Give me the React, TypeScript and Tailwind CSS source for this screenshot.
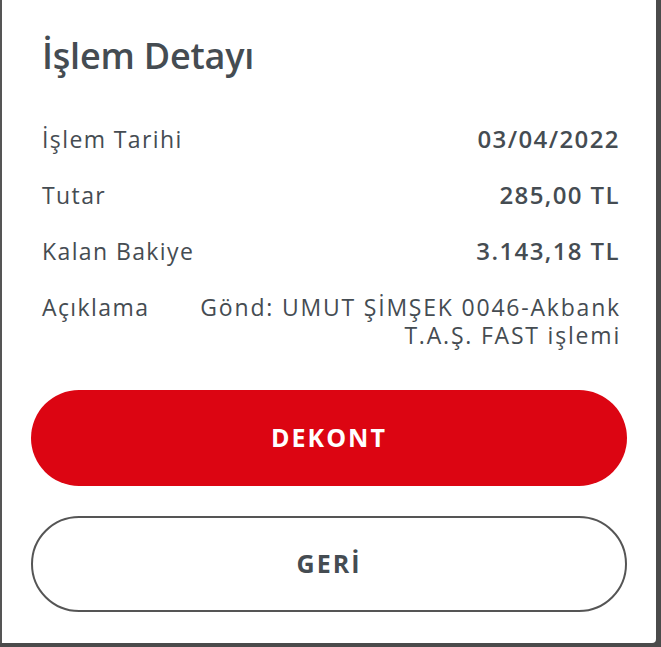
const rows = [
  { label: "İşlem Tarihi", value: "03/04/2022" },
  { label: "Tutar", value: "285,00 TL" },
  { label: "Kalan Bakiye", value: "3.143,18 TL" },
];

export default function App() {
  return (
    <div className="w-[661px] h-[647px] bg-[#4b4b4b] overflow-hidden font-['Open_Sans',sans-serif]">
      <div className="w-[656px] h-[643px] bg-white border-l-2 border-[#555] rounded-br-[4px] flex flex-col">
        <h1 className="pl-[40px] pt-[34px] text-[36px] leading-[44px] font-semibold text-[#454c52] tracking-[-0.2px]">
          İşlem Detayı
        </h1>

        <div className="mt-[47px] pl-[40px] pr-[37px] flex flex-col text-[23px] tracking-[1.4px] text-[#454c52]">
          {rows.map((row) => (
            <div key={row.label} className="flex justify-between items-center h-[28px] mb-[28px]">
              <span>{row.label}</span>
              <span className="font-semibold text-[24px] tracking-[1.4px] -mr-[1px]">{row.value}</span>
            </div>
          ))}
          <div className="flex justify-between items-start">
            <span className="leading-[28px]">Açıklama</span>
            <div className="text-right tracking-[1.8px] -mr-[2px] flex flex-col">
              <span className="leading-[28px]">Gönd: UMUT ŞİMŞEK 0046-Akbank</span>
              <span className="leading-[28px]">T.A.Ş. FAST işlemi</span>
            </div>
          </div>
        </div>

        <div className="mt-[41px] px-[29px] flex flex-col gap-[30px]">
          <button className="h-[96px] w-full rounded-full bg-[#dc0512] text-white text-[25px] font-bold tracking-[2px]">
            DEKONT
          </button>
          <button className="h-[96px] w-full rounded-full border-2 border-[#555] bg-white text-[#454c52] text-[25px] font-bold tracking-[2px]">
            GERİ
          </button>
        </div>
      </div>
    </div>
  );
}
